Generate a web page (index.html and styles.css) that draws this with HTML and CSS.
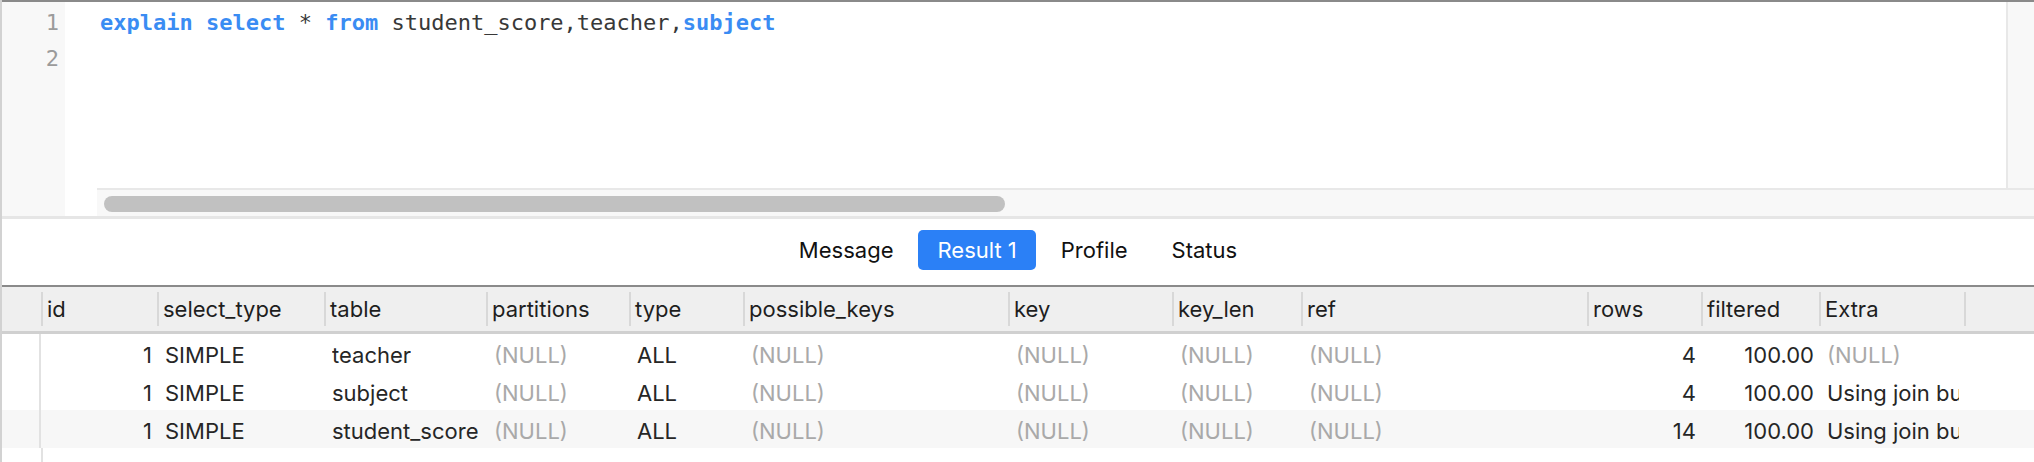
FILE: index.html
```html
<!DOCTYPE html>
<html>
<head>
<meta charset="utf-8">
<link rel="stylesheet" href="styles.css">
</head>
<body>
<div class="app">
  <div class="editor">
    <div class="gutter">
      <div class="ln">1</div>
      <div class="ln">2</div>
    </div>
    <div class="main">
      <div class="code-row">
        <div class="code">
          <div class="line"><span class="kw">explain</span> <span class="kw">select</span> * <span class="kw">from</span> student_score,teacher,<span class="kw">subject</span></div>
          <div class="line"></div>
        </div>
        <div class="vscroll"></div>
      </div>
      <div class="hscroll">
        <div class="hs-track"><div class="thumb"></div></div>
      </div>
    </div>
  </div>

  <div class="tabs">
    <div class="tab">Message</div>
    <div class="tab active">Result 1</div>
    <div class="tab">Profile</div>
    <div class="tab">Status</div>
  </div>

  <div class="grid">
    <div class="head">
      <div class="corner"></div>
      <div class="hc">id</div>
      <div class="hc">select_type</div>
      <div class="hc">table</div>
      <div class="hc">partitions</div>
      <div class="hc">type</div>
      <div class="hc">possible_keys</div>
      <div class="hc">key</div>
      <div class="hc">key_len</div>
      <div class="hc">ref</div>
      <div class="hc">rows</div>
      <div class="hc">filtered</div>
      <div class="hc">Extra</div>
      <div class="hc"></div>
    </div>
    <div class="body">
      <div class="row">
        <div class="rh"></div>
        <div class="dc num"><span>1</span></div>
        <div class="dc"><span>SIMPLE</span></div>
        <div class="dc"><span>teacher</span></div>
        <div class="dc null"><span>(NULL)</span></div>
        <div class="dc"><span>ALL</span></div>
        <div class="dc null"><span>(NULL)</span></div>
        <div class="dc null"><span>(NULL)</span></div>
        <div class="dc null"><span>(NULL)</span></div>
        <div class="dc null"><span>(NULL)</span></div>
        <div class="dc num"><span>4</span></div>
        <div class="dc num"><span>100.00</span></div>
        <div class="dc null"><span>(NULL)</span></div>
        <div class="dc"></div>
      </div>
      <div class="row">
        <div class="rh"></div>
        <div class="dc num"><span>1</span></div>
        <div class="dc"><span>SIMPLE</span></div>
        <div class="dc"><span>subject</span></div>
        <div class="dc null"><span>(NULL)</span></div>
        <div class="dc"><span>ALL</span></div>
        <div class="dc null"><span>(NULL)</span></div>
        <div class="dc null"><span>(NULL)</span></div>
        <div class="dc null"><span>(NULL)</span></div>
        <div class="dc null"><span>(NULL)</span></div>
        <div class="dc num"><span>4</span></div>
        <div class="dc num"><span>100.00</span></div>
        <div class="dc"><span>Using join buffer (hash join)</span></div>
        <div class="dc"></div>
      </div>
      <div class="row alt">
        <div class="rh"></div>
        <div class="dc num"><span>1</span></div>
        <div class="dc"><span>SIMPLE</span></div>
        <div class="dc"><span>student_score</span></div>
        <div class="dc null"><span>(NULL)</span></div>
        <div class="dc"><span>ALL</span></div>
        <div class="dc null"><span>(NULL)</span></div>
        <div class="dc null"><span>(NULL)</span></div>
        <div class="dc null"><span>(NULL)</span></div>
        <div class="dc null"><span>(NULL)</span></div>
        <div class="dc num"><span>14</span></div>
        <div class="dc num"><span>100.00</span></div>
        <div class="dc"><span>Using join buffer (hash join)</span></div>
        <div class="dc"></div>
      </div>
      <div class="filler"></div>
    </div>
  </div>
</div>
</body>
</html>
```

FILE: styles.css
```css
html, body {
  margin: 0;
  padding: 0;
  background: #ffffff;
}

.app {
  width: 2034px;
  height: 462px;
  box-sizing: border-box;
  border-left: 2px solid #d2d2d2;
  display: flex;
  flex-direction: column;
  overflow: hidden;
  font-family: Inter, "Liberation Sans", sans-serif;
  font-size: 22px;
  color: #222222;
}

/* ---------- editor ---------- */
.editor {
  height: 219px;
  box-sizing: border-box;
  border-top: 2px solid #8a8a8a;
  border-bottom: 3px solid #e6e6e6;
  display: flex;
  flex-shrink: 0;
}

.gutter {
  width: 63px;
  background: #f8f8f8;
  padding-top: 3px;
  box-sizing: border-box;
  font-family: "DejaVu Sans Mono", monospace;
  font-size: 22px;
  color: #9b9b9b;
}

.ln {
  height: 36px;
  line-height: 36px;
  text-align: right;
  padding-right: 6px;
}

.main {
  flex: 1;
  display: flex;
  flex-direction: column;
  background: #ffffff;
  min-height: 0;
}

.code-row {
  flex: 1;
  display: flex;
  min-height: 0;
}

.code {
  flex: 1;
  padding-top: 3px;
  padding-left: 35px;
  font-family: "DejaVu Sans Mono", monospace;
  font-size: 22px;
  color: #383838;
}

.line {
  height: 36px;
  line-height: 36px;
  white-space: pre;
}

.kw {
  color: #3a8cf3;
  font-weight: bold;
}

.vscroll {
  width: 26px;
  background: #f8f8f8;
  border-left: 2px solid #e8e8e8;
}

.hscroll {
  height: 28px;
  flex-shrink: 0;
  display: flex;
  padding-left: 32px;
}

.hs-track {
  flex: 1;
  background: #f8f8f8;
  border-top: 2px solid #e8e8e8;
  padding: 6px 0 0 7px;
  box-sizing: border-box;
}

.thumb {
  width: 901px;
  height: 16px;
  border-radius: 8px;
  background: #c1c1c1;
}

/* ---------- tabs ---------- */
.tabs {
  height: 66px;
  flex-shrink: 0;
  display: flex;
  justify-content: center;
  align-items: center;
  gap: 6px;
  padding-bottom: 4px;
  box-sizing: border-box;
}

.tab {
  height: 40px;
  line-height: 40px;
  padding: 0 19px;
  border-radius: 5px;
  color: #111111;
}

.tab.active {
  background: #2b80f6;
  color: #ffffff;
}

/* ---------- grid ---------- */
.grid {
  flex: 1;
  display: flex;
  flex-direction: column;
}

.head {
  height: 49px;
  box-sizing: border-box;
  border-top: 2px solid #8a8a8a;
  border-bottom: 3px solid #d0d0d0;
  background: #efefef;
  display: grid;
  grid-template-columns: 39px 116px 167px 162px 143px 114px 265px 164px 129px 286px 114px 118px 145px 1fr;
  align-items: center;
  flex-shrink: 0;
}

.hc {
  height: 34px;
  line-height: 34px;
  border-left: 2px solid #d8d8d8;
  padding-left: 4px;
  white-space: nowrap;
  overflow: hidden;
  color: #1e1e1e;
}

.body {
  flex: 1;
  display: flex;
  flex-direction: column;
}

.row {
  height: 38px;
  display: grid;
  grid-template-columns: 39px 118px 167px 162px 143px 114px 265px 164px 129px 286px 114px 118px 145px 1fr;
  align-items: stretch;
}

.row.alt {
  background: #f7f7f7;
}

.rh {
  border-right: 2px solid #e2e2e2;
}

.dc {
  display: flex;
  align-items: center;
  padding: 3px 7px 0 6px;
  white-space: nowrap;
  min-width: 0;
}

.dc > span {
  overflow: hidden;
  color: #262626;
}

.dc.num {
  justify-content: flex-end;
}

.dc.null > span {
  color: #a9a9a9;
}

.filler {
  flex: 1;
  margin-left: 39px;
  border-left: 2px solid #e2e2e2;
}
```
